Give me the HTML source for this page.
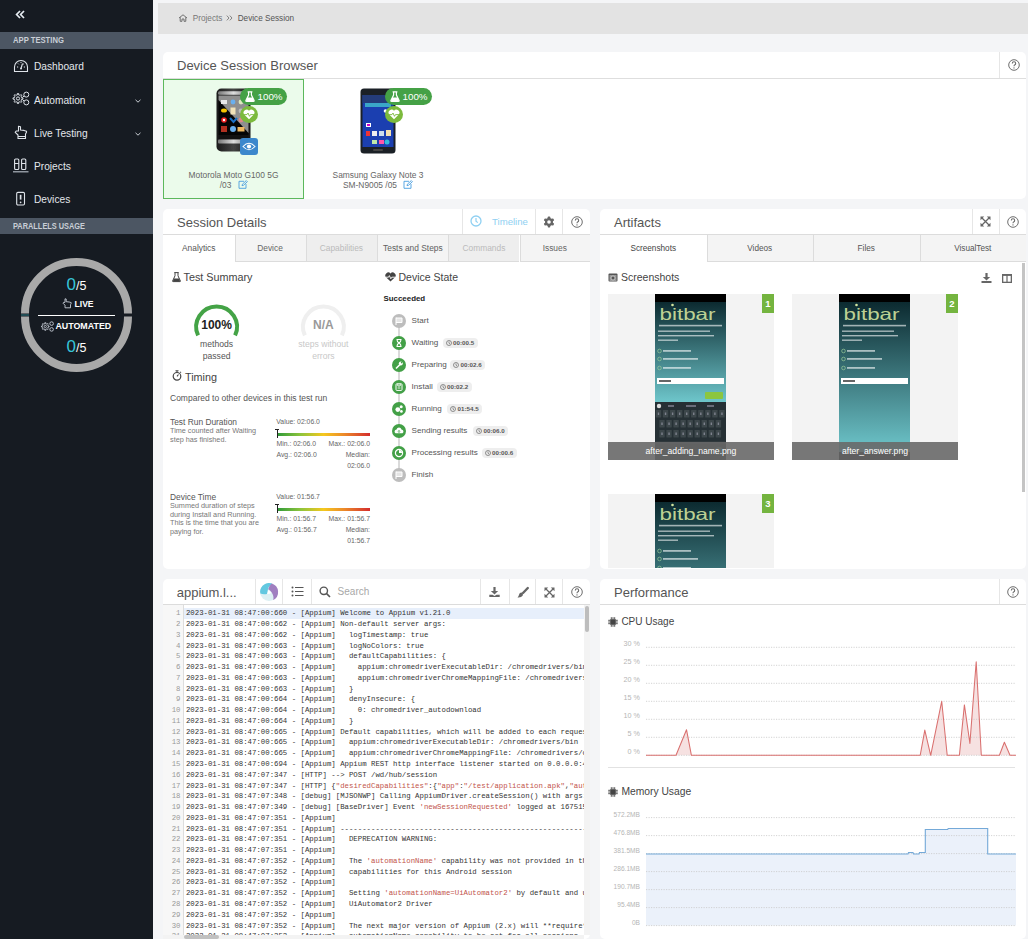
<!DOCTYPE html>
<html><head><meta charset="utf-8">
<style>
*{box-sizing:border-box;margin:0;padding:0}
html,body{width:1028px;height:939px;overflow:hidden;background:#f4f5f7;font-family:"Liberation Sans",sans-serif;color:#333}
.abs{position:absolute}
.tx{position:absolute;white-space:nowrap}
svg{position:absolute;overflow:visible}
.panel{position:absolute;background:#fff;border-radius:5px}
</style></head><body>
<div class="abs" style="left:0px;top:0px;width:153px;height:939px;background:#161b22"></div>
<svg style="left:15px;top:10px" width="10" height="9" viewBox="0 0 10 9"><path d="M5 1 L1.6 4.5 L5 8 M9 1 L5.6 4.5 L9 8" stroke="#e6ecf2" stroke-width="1.7" fill="none"/></svg>
<div class="abs" style="left:0px;top:32px;width:153px;height:17px;background:#4c5663"></div>
<div class="tx" style="left:13px;top:35.1px;font-size:9px;line-height:10.8px;color:#c9ced6;font-weight:700;transform:scaleX(0.85);transform-origin:0 50%">APP TESTING</div>
<div class="abs" style="left:0px;top:218px;width:153px;height:16px;background:#4c5663"></div>
<div class="tx" style="left:13px;top:220.6px;font-size:9px;line-height:10.8px;color:#c9ced6;font-weight:700;transform:scaleX(0.82);transform-origin:0 50%">PARALLELS USAGE</div>
<div class="tx" style="left:34px;top:60.88px;font-size:10.2px;line-height:12.24px;color:#e3e7ec;font-weight:400;">Dashboard</div>
<div class="tx" style="left:34px;top:94.58px;font-size:10.2px;line-height:12.24px;color:#e3e7ec;font-weight:400;">Automation</div>
<div class="tx" style="left:34px;top:128.38px;font-size:10.2px;line-height:12.24px;color:#e3e7ec;font-weight:400;">Live Testing</div>
<div class="tx" style="left:34px;top:161.38px;font-size:10.2px;line-height:12.24px;color:#e3e7ec;font-weight:400;">Projects</div>
<div class="tx" style="left:34px;top:194.38px;font-size:10.2px;line-height:12.24px;color:#e3e7ec;font-weight:400;">Devices</div>
<svg style="left:135px;top:99px" width="6" height="4"><path d="M0.5 0.8 L3 3.2 L5.5 0.8" stroke="#c8cdd3" stroke-width="1" fill="none"/></svg>
<svg style="left:135px;top:132px" width="6" height="4"><path d="M0.5 0.8 L3 3.2 L5.5 0.8" stroke="#c8cdd3" stroke-width="1" fill="none"/></svg>
<svg style="left:13px;top:59px" width="16" height="14" viewBox="0 0 16 14"><path d="M1.5 12.5 V8 A6.5 6.5 0 0 1 14.5 8 V12.5 Z" stroke="#dfe4ea" stroke-width="1.1" fill="none"/><path d="M8 9.5 L9.5 4.5" stroke="#dfe4ea" stroke-width="1.1"/><circle cx="8" cy="9.5" r="1" fill="#dfe4ea"/><path d="M4 8h1.2M10.8 8h1.2M5 4.5l.8.8M11 4.5l-.8.8M8 3v1" stroke="#dfe4ea" stroke-width="1"/></svg>
<svg style="left:12px;top:91px" width="18" height="15" viewBox="0 0 18 15"><path d="M9.47 6.22 L9.65 6.89 L10.96 6.84 L10.96 8.16 L9.65 8.11 L9.47 8.78 L9.36 9.05 L9.01 9.65 L9.97 10.54 L9.04 11.47 L8.15 10.51 L7.55 10.86 L7.28 10.97 L6.61 11.15 L6.66 12.46 L5.34 12.46 L5.39 11.15 L4.72 10.97 L4.45 10.86 L3.85 10.51 L2.96 11.47 L2.03 10.54 L2.99 9.65 L2.64 9.05 L2.53 8.78 L2.35 8.11 L1.04 8.16 L1.04 6.84 L2.35 6.89 L2.53 6.22 L2.64 5.95 L2.99 5.35 L2.03 4.46 L2.96 3.53 L3.85 4.49 L4.45 4.14 L4.72 4.03 L5.39 3.85 L5.34 2.54 L6.66 2.54 L6.61 3.85 L7.28 4.03 L7.55 4.14 L8.15 4.49 L9.04 3.53 L9.97 4.46 L9.01 5.35 L9.36 5.95 Z" stroke="#dfe4ea" stroke-width="1" fill="none" stroke-linejoin="round"/><circle cx="6" cy="7.5" r="1.6" stroke="#dfe4ea" stroke-width="1" fill="none"/><circle cx="14.3" cy="3.6" r="2.5" stroke="#dfe4ea" stroke-width="1" fill="none"/><circle cx="14.3" cy="11.4" r="2.5" stroke="#dfe4ea" stroke-width="1" fill="none"/><path d="M10.6 6.3 L12 5 M10.6 8.7 L12 10" stroke="#dfe4ea" stroke-width="1"/></svg>
<svg style="left:14px;top:125px" width="14" height="15" viewBox="0 0 14 15"><path d="M4.5 1.2 V6 H2.2 L1.2 7.4 L4 10 V13.5 H11.5 V9 L12.5 7.2 V6.2 L10 5.4 L6.5 5 V1.8 Z" stroke="#dfe4ea" stroke-width="1.1" fill="none" stroke-linejoin="round"/><path d="M4 11.5 H11.5" stroke="#dfe4ea" stroke-width="1"/></svg>
<svg style="left:12px;top:158px" width="17" height="17" viewBox="0 0 17 17"><rect x="2.6" y="1" width="4.2" height="10.5" rx="1" stroke="#dfe4ea" stroke-width="1.1" fill="none"/><rect x="9.6" y="1" width="4.2" height="10.5" rx="1" stroke="#dfe4ea" stroke-width="1.1" fill="none"/><path d="M2.6 5.5h4.2M9.6 5.5h4.2" stroke="#dfe4ea" stroke-width="1"/><path d="M1 13.8 H16.5" stroke="#aeb6c0" stroke-width="1.2"/></svg>
<svg style="left:15px;top:191px" width="11" height="15" viewBox="0 0 11 15"><rect x="1.7" y="1.4" width="7.8" height="12.6" rx="1.2" stroke="#dfe4ea" stroke-width="1.1" fill="none"/><path d="M5.6 3.8 V8.6" stroke="#dfe4ea" stroke-width="1.7"/><circle cx="5.6" cy="11.3" r="0.85" fill="#dfe4ea"/></svg>
<svg style="left:0;top:0" width="153" height="400" viewBox="0 0 153 400">
<path d="M25 313.5 A51.5 51.5 0 0 1 128 313.5" stroke="#a9a9a9" stroke-width="8" fill="none"/>
<path d="M25 316.5 A51.5 51.5 0 0 0 128 316.5" stroke="#a9a9a9" stroke-width="8" fill="none"/>
<path d="M21 315 H29" stroke="#2f8a94" stroke-width="0.9"/>
<path d="M38 315.5 H115" stroke="#ffffff" stroke-width="1.2"/>
</svg>
<div class="tx" style="left:0;width:153px;text-align:center;top:275px;color:#fff;line-height:20px"><span style="color:#36c5d8;font-size:17px">0</span><span style="font-size:12.5px">/5</span></div>
<div class="tx" style="left:0;width:153px;text-align:center;top:337px;color:#fff;line-height:20px"><span style="color:#36c5d8;font-size:17px">0</span><span style="font-size:12.5px">/5</span></div>
<div class="tx" style="left:74.5px;top:298.54px;font-size:8.6px;line-height:10.32px;color:#fff;font-weight:700;">LIVE</div>
<svg style="left:62px;top:298px" width="10" height="11" viewBox="0 0 10 11"><path d="M3 0.8 V4.4 H1.5 L1 5.2 L3 7.2 V9.8 H8.5 V6.8 L9.2 5.2 V4.6 L7.2 4 L4.2 3.7 V1 Z" stroke="#c6cdd6" stroke-width="0.9" fill="none"/></svg>
<div class="tx" style="left:55.4px;top:321.26px;font-size:8.9px;line-height:10.68px;color:#fff;font-weight:700;">AUTOMATED</div>
<svg style="left:40.5px;top:321px" width="13" height="11" viewBox="0 0 13 11"><path d="M6.93 4.53 L7.06 5.04 L8.07 5.00 L8.07 6.00 L7.06 5.96 L6.93 6.47 L6.84 6.67 L6.58 7.13 L7.32 7.81 L6.61 8.52 L5.93 7.78 L5.47 8.04 L5.27 8.13 L4.76 8.26 L4.80 9.27 L3.80 9.27 L3.84 8.26 L3.33 8.13 L3.13 8.04 L2.67 7.78 L1.99 8.52 L1.28 7.81 L2.02 7.13 L1.76 6.67 L1.67 6.47 L1.54 5.96 L0.53 6.00 L0.53 5.00 L1.54 5.04 L1.67 4.53 L1.76 4.33 L2.02 3.87 L1.28 3.19 L1.99 2.48 L2.67 3.22 L3.13 2.96 L3.33 2.87 L3.84 2.74 L3.80 1.73 L4.80 1.73 L4.76 2.74 L5.27 2.87 L5.47 2.96 L5.93 3.22 L6.61 2.48 L7.32 3.19 L6.58 3.87 L6.84 4.33 Z" stroke="#c6cdd6" stroke-width="0.9" fill="none"/><circle cx="4.3" cy="5.5" r="1.1" stroke="#c6cdd6" stroke-width="0.8" fill="none"/><circle cx="10.6" cy="2.6" r="1.8" stroke="#c6cdd6" stroke-width="0.9" fill="none"/><circle cx="10.6" cy="8.4" r="1.8" stroke="#c6cdd6" stroke-width="0.9" fill="none"/></svg>
<div class="abs" style="left:158px;top:3px;width:870px;height:31px;background:#e3e3e3"></div>
<svg style="left:178px;top:14px" width="10" height="8" viewBox="0 0 10 8"><path d="M1 4 L5 0.8 L9 4 M2.2 3.2 V7.3 H4 V5 H6 V7.3 H7.8 V3.2" stroke="#666" stroke-width="0.9" fill="none"/></svg>
<div class="tx" style="left:192.8px;top:13.88px;font-size:8.2px;line-height:9.84px;color:#777;font-weight:400;">Projects</div>
<svg style="left:226px;top:15px" width="7" height="6" viewBox="0 0 7 6"><path d="M0.8 0.6 L3 3 L0.8 5.4 M3.8 0.6 L6 3 L3.8 5.4" stroke="#777" stroke-width="0.9" fill="none"/></svg>
<div class="tx" style="left:237.7px;top:13.88px;font-size:8.2px;line-height:9.84px;color:#555;font-weight:400;">Device Session</div>
<div class="panel" style="left:163px;top:52px;width:863px;height:147px"></div>
<div class="abs" style="left:163px;top:78px;width:863px;height:1px;background:#dedede"></div>
<div class="abs" style="left:999px;top:52px;width:1px;height:26px;background:#e6e6e6"></div>
<svg style="left:1007.5px;top:58.7px" width="12" height="12" viewBox="0 0 12 12"><circle cx="6" cy="6" r="5.3" stroke="#666" stroke-width="0.95" fill="none"/><path d="M4.3 4.6 Q4.3 2.8 6 2.8 Q7.7 2.8 7.7 4.4 Q7.7 5.4 6.6 5.9 Q6 6.2 6 7.3" stroke="#666" stroke-width="1.05" fill="none"/><circle cx="6" cy="8.9" r="0.65" fill="#666"/></svg>
<div class="tx" style="left:177px;top:58.0px;font-size:13px;line-height:15.6px;color:#555;font-weight:400;">Device Session Browser</div>
<div class="abs" style="left:163px;top:79px;width:141px;height:120px;background:#ebfbeb;border:1px solid #5cb85c"></div>
<svg style="left:216px;top:88px" width="35" height="64" viewBox="0 0 35 64">
<defs><linearGradient id="pg1" x1="0" x2="1"><stop offset="0" stop-color="#1a1a1a"/><stop offset=".5" stop-color="#444"/><stop offset="1" stop-color="#151515"/></linearGradient>
<linearGradient id="pg2" x1="0" x2="1"><stop offset="0" stop-color="#777"/><stop offset=".5" stop-color="#ddd"/><stop offset="1" stop-color="#777"/></linearGradient></defs>
<rect x="0.5" y="0.5" width="34" height="63" rx="5" fill="url(#pg1)"/>
<rect x="2" y="3.2" width="31" height="3.6" rx="1.5" fill="url(#pg2)"/>
<rect x="2.5" y="7.5" width="30" height="39.5" fill="#050505"/>
<path d="M2.5 7.5 H32.5 V45 L2.5 12 Z" fill="#8f8f8f"/>
<rect x="5" y="12" width="6" height="4" fill="#e8e8e8"/><circle cx="17" cy="14" r="2.4" fill="#6ab0ef"/><circle cx="25" cy="14" r="2.4" fill="#dde8c0"/>
<ellipse cx="8" cy="22.5" rx="3" ry="2" fill="#f5c400"/><rect x="14.5" y="19.5" width="5" height="7" fill="#f1e2b8"/><circle cx="25" cy="23" r="2.4" fill="#bbb"/>
<circle cx="8" cy="32" r="2.8" fill="#e22"/><circle cx="8" cy="32" r="1.2" fill="#fff"/><path d="M14 30 l3.5 4 l3.5-4" stroke="#1a6fc4" stroke-width="2" fill="none"/><circle cx="25" cy="32" r="2.4" fill="#d88"/>
<rect x="5" y="38" width="6" height="6" fill="#b03020"/><circle cx="17" cy="41" r="3" fill="#6ab0ef"/><rect x="21.5" y="39" width="7" height="4.5" fill="#eeb860"/>
<rect x="2.5" y="47" width="30" height="4.5" fill="#111"/>
<rect x="2" y="51.5" width="31" height="4" rx="1" fill="url(#pg2)"/>
<circle cx="17.5" cy="59.5" r="2" fill="none" stroke="#444" stroke-width="0.8"/>
</svg>
<svg style="left:360px;top:88px" width="36" height="66" viewBox="0 0 36 66">
<rect x="0.5" y="0.5" width="35" height="65" rx="3.5" fill="#1b2026"/>
<rect x="2.5" y="7" width="31" height="52" fill="#1b3fb0"/>
<rect x="2.5" y="7" width="31" height="8" fill="#243c7a"/>
<rect x="5" y="15" width="26" height="4" fill="#3aa6c8"/>
<rect x="6" y="35" width="5" height="4" fill="#fff"/><rect x="7" y="36" width="3" height="2" fill="#c0c"/>
<rect x="6" y="43" width="4" height="5" fill="#e33"/><rect x="12" y="43" width="5" height="5" fill="#eee"/><rect x="19" y="43" width="5" height="5" fill="#cde"/><rect x="26" y="42" width="5" height="6" fill="#f3e0b0"/>
<rect x="12" y="52" width="5" height="4" fill="#bfe8a8"/><rect x="19" y="52" width="5" height="4" fill="#f5a"/><circle cx="27" cy="54" r="2.5" fill="#3bd"/>
<circle cx="25.5" cy="23" r="1.8" fill="#fff"/>
<rect x="13" y="61" width="10" height="2" rx="1" fill="#444"/>
</svg>
<div class="abs" style="left:240px;top:88px;width:47px;height:17px;border-radius:9px;background:#45a146"></div>
<svg style="left:245.4px;top:91px" width="10" height="11" viewBox="0 0 10 11"><path d="M2.6 0.8 H7.4 M3.6 0.8 V4 L0.9 9.4 Q0.6 10.3 1.5 10.3 H8.5 Q9.4 10.3 9.1 9.4 L6.4 4 V0.8" stroke="#fff" stroke-width="1.2" fill="none"/><path d="M2.3 6.6 H7.7 L9 10 H1 Z" fill="#fff"/></svg>
<div class="tx" style="left:257.5px;top:90.92px;font-size:9.8px;line-height:11.76px;color:#fff;font-weight:400;">100%</div>
<div class="abs" style="left:240px;top:106px;width:18px;height:17px;border-radius:50%;background:#7cba3d"></div>
<svg style="left:243px;top:109px" width="12" height="11" viewBox="0 0 12 11"><path d="M6 10.3 L1.2 5.4 A2.8 2.8 0 0 1 6 1.8 A2.8 2.8 0 0 1 10.8 5.4 Z" fill="#fff"/><path d="M1 5.6 H4 L5 4 L6.5 7.3 L7.5 5.6 H11" stroke="#7cba3d" stroke-width="0.9" fill="none"/></svg>
<div class="abs" style="left:385px;top:88px;width:47px;height:17px;border-radius:9px;background:#45a146"></div>
<svg style="left:390.4px;top:91px" width="10" height="11" viewBox="0 0 10 11"><path d="M2.6 0.8 H7.4 M3.6 0.8 V4 L0.9 9.4 Q0.6 10.3 1.5 10.3 H8.5 Q9.4 10.3 9.1 9.4 L6.4 4 V0.8" stroke="#fff" stroke-width="1.2" fill="none"/><path d="M2.3 6.6 H7.7 L9 10 H1 Z" fill="#fff"/></svg>
<div class="tx" style="left:402.5px;top:90.92px;font-size:9.8px;line-height:11.76px;color:#fff;font-weight:400;">100%</div>
<div class="abs" style="left:385px;top:106px;width:18px;height:17px;border-radius:50%;background:#7cba3d"></div>
<svg style="left:388px;top:109px" width="12" height="11" viewBox="0 0 12 11"><path d="M6 10.3 L1.2 5.4 A2.8 2.8 0 0 1 6 1.8 A2.8 2.8 0 0 1 10.8 5.4 Z" fill="#fff"/><path d="M1 5.6 H4 L5 4 L6.5 7.3 L7.5 5.6 H11" stroke="#7cba3d" stroke-width="0.9" fill="none"/></svg>
<div class="abs" style="left:240px;top:138px;width:18px;height:17px;border-radius:3px;background:#3c87cc"></div>
<svg style="left:242px;top:142px" width="14" height="9" viewBox="0 0 14 9"><path d="M1 4.5 Q7 -2 13 4.5 Q7 11 1 4.5 Z" stroke="#fff" stroke-width="1.1" fill="none"/><circle cx="7" cy="4.5" r="2.1" fill="#fff"/></svg>
<div class="tx" style="left:83.5px;width:300px;text-align:center;top:169.96px;font-size:8.4px;line-height:10.08px;color:#666;font-weight:400;">Motorola Moto G100 5G</div>
<div class="tx" style="left:75.5px;width:300px;text-align:center;top:180.46px;font-size:8.4px;line-height:10.08px;color:#666;font-weight:400;">/03</div>
<div class="tx" style="left:228px;width:300px;text-align:center;top:169.96px;font-size:8.4px;line-height:10.08px;color:#666;font-weight:400;">Samsung Galaxy Note 3</div>
<div class="tx" style="left:220px;width:300px;text-align:center;top:180.46px;font-size:8.4px;line-height:10.08px;color:#666;font-weight:400;">SM-N9005 /05</div>
<svg style="left:238px;top:180px" width="10" height="9" viewBox="0 0 10 9"><path d="M6 1.3 H1 V8.3 H8 V4" stroke="#4a9ee0" stroke-width="0.9" fill="none"/><path d="M4 5.7 L4.4 4.2 L8.3 0.6 L9.4 1.7 L5.5 5.3 Z" stroke="#4a9ee0" stroke-width="0.9" fill="none"/></svg>
<svg style="left:403px;top:180px" width="10" height="9" viewBox="0 0 10 9"><path d="M6 1.3 H1 V8.3 H8 V4" stroke="#4a9ee0" stroke-width="0.9" fill="none"/><path d="M4 5.7 L4.4 4.2 L8.3 0.6 L9.4 1.7 L5.5 5.3 Z" stroke="#4a9ee0" stroke-width="0.9" fill="none"/></svg>
<div class="panel" style="left:163px;top:209px;width:427px;height:360px"></div>
<div class="tx" style="left:177px;top:215.0px;font-size:13px;line-height:15.6px;color:#555;font-weight:400;">Session Details</div>
<div class="abs" style="left:462px;top:209px;width:1px;height:25px;background:#e6e6e6"></div>
<div class="abs" style="left:535px;top:209px;width:1px;height:25px;background:#e6e6e6"></div>
<div class="abs" style="left:562px;top:209px;width:1px;height:25px;background:#e6e6e6"></div>
<svg style="left:470px;top:215px" width="12" height="12" viewBox="0 0 12 12"><circle cx="6" cy="6" r="5" stroke="#8fd0f2" stroke-width="1.3" fill="none"/><path d="M6 3 V6.2 L7.8 7.6" stroke="#8fd0f2" stroke-width="1.2" fill="none"/></svg>
<div class="tx" style="left:492px;top:215.74px;font-size:9.6px;line-height:11.52px;color:#8fd0f2;font-weight:400;">Timeline</div>
<svg style="left:543.3px;top:216px" width="12" height="12" viewBox="0 0 12 12"><circle cx="6" cy="6" r="4" fill="#666"/><rect x="4.75" y="0.6" width="2.5" height="3" rx="0.7" fill="#666" transform="rotate(0 6 6)"/><rect x="4.75" y="0.6" width="2.5" height="3" rx="0.7" fill="#666" transform="rotate(60 6 6)"/><rect x="4.75" y="0.6" width="2.5" height="3" rx="0.7" fill="#666" transform="rotate(120 6 6)"/><rect x="4.75" y="0.6" width="2.5" height="3" rx="0.7" fill="#666" transform="rotate(180 6 6)"/><rect x="4.75" y="0.6" width="2.5" height="3" rx="0.7" fill="#666" transform="rotate(240 6 6)"/><rect x="4.75" y="0.6" width="2.5" height="3" rx="0.7" fill="#666" transform="rotate(300 6 6)"/><circle cx="6" cy="6" r="1.8" fill="#fff"/></svg>
<svg style="left:570.8px;top:215.7px" width="12" height="12" viewBox="0 0 12 12"><circle cx="6" cy="6" r="5.3" stroke="#666" stroke-width="0.95" fill="none"/><path d="M4.3 4.6 Q4.3 2.8 6 2.8 Q7.7 2.8 7.7 4.4 Q7.7 5.4 6.6 5.9 Q6 6.2 6 7.3" stroke="#666" stroke-width="1.05" fill="none"/><circle cx="6" cy="8.9" r="0.65" fill="#666"/></svg>
<div class="abs" style="left:163px;top:234px;width:427px;height:1px;background:#dcdcdc"></div>
<div class="abs" style="left:163px;top:235px;width:71.5px;height:27px;background:#fff"></div>
<div class="tx" style="left:48.75px;width:300px;text-align:center;top:243.16px;font-size:8.4px;line-height:10.08px;color:#555;font-weight:400;">Analytics</div>
<div class="abs" style="left:234.5px;top:235px;width:71.0px;height:27px;background:#f4f4f4;border-left:1px solid #dcdcdc;border-bottom:1px solid #dcdcdc"></div>
<div class="tx" style="left:120.0px;width:300px;text-align:center;top:243.16px;font-size:8.4px;line-height:10.08px;color:#666;font-weight:400;">Device</div>
<div class="abs" style="left:305.5px;top:235px;width:71.80000000000001px;height:27px;background:#eeeeee;border-left:1px solid #dcdcdc;border-bottom:1px solid #dcdcdc"></div>
<div class="tx" style="left:191.39999999999998px;width:300px;text-align:center;top:243.16px;font-size:8.4px;line-height:10.08px;color:#bbb;font-weight:400;">Capabilities</div>
<div class="abs" style="left:377.3px;top:235px;width:71.09999999999997px;height:27px;background:#f4f4f4;border-left:1px solid #dcdcdc;border-bottom:1px solid #dcdcdc"></div>
<div class="tx" style="left:262.85px;width:300px;text-align:center;top:243.16px;font-size:8.4px;line-height:10.08px;color:#606060;font-weight:400;">Tests and Steps</div>
<div class="abs" style="left:448.4px;top:235px;width:71.10000000000002px;height:27px;background:#eeeeee;border-left:1px solid #dcdcdc;border-bottom:1px solid #dcdcdc"></div>
<div class="tx" style="left:333.95px;width:300px;text-align:center;top:243.16px;font-size:8.4px;line-height:10.08px;color:#bbb;font-weight:400;">Commands</div>
<div class="abs" style="left:519.5px;top:235px;width:70.5px;height:27px;background:#f4f4f4;border-left:1px solid #dcdcdc;border-bottom:1px solid #dcdcdc"></div>
<div class="tx" style="left:404.75px;width:300px;text-align:center;top:243.16px;font-size:8.4px;line-height:10.08px;color:#666;font-weight:400;">Issues</div>
<svg style="left:172px;top:272px" width="9" height="10" viewBox="0 0 9 10"><path d="M2.3 0.6 H6.7 M3 0.6 V3.8 L0.6 9 Q0.4 9.6 1.1 9.6 H7.9 Q8.6 9.6 8.4 9 L6 3.8 V0.6" stroke="#444" stroke-width="1" fill="none"/><path d="M1.8 6.5 H7.2 L8.2 9.4 H0.8 Z" fill="#444"/></svg>
<div class="tx" style="left:183.5px;top:271.02px;font-size:10.8px;line-height:12.96px;color:#444;font-weight:400;">Test Summary</div>
<svg style="left:385px;top:272px" width="11" height="10" viewBox="0 0 11 10"><path d="M5.5 9.5 L1 5.2 A2.6 2.6 0 0 1 5.5 1.6 A2.6 2.6 0 0 1 10 5.2 Z" fill="#444"/><path d="M0.8 5.2 H3.5 L4.4 3.6 L5.8 6.8 L6.8 5.2 H10.2" stroke="#fff" stroke-width="0.9" fill="none"/></svg>
<div class="tx" style="left:398.5px;top:271.2px;font-size:10.5px;line-height:12.6px;color:#444;font-weight:400;">Device State</div>
<svg style="left:0;top:0" width="400" height="400"><path d="M198.11 335.42 A20.4 20.4 0 1 1 235.09 335.42" stroke="#44a346" stroke-width="4" fill="none"/><path d="M304.91 335.42 A20.4 20.4 0 1 1 341.89 335.42" stroke="#efefef" stroke-width="4" fill="none"/></svg>
<div class="tx" style="left:66.6px;width:300px;text-align:center;top:318.0px;font-size:12px;line-height:14.4px;color:#222;font-weight:700;">100%</div>
<div class="tx" style="left:66.6px;width:300px;text-align:center;top:339.34px;font-size:8.6px;line-height:10.32px;color:#555;font-weight:400;">methods</div>
<div class="tx" style="left:66.6px;width:300px;text-align:center;top:350.54px;font-size:8.6px;line-height:10.32px;color:#555;font-weight:400;">passed</div>
<div class="tx" style="left:173.39999999999998px;width:300px;text-align:center;top:318.0px;font-size:12px;line-height:14.4px;color:#999;font-weight:700;">N/A</div>
<div class="tx" style="left:173.39999999999998px;width:300px;text-align:center;top:339.34px;font-size:8.6px;line-height:10.32px;color:#c8c8c8;font-weight:400;">steps without</div>
<div class="tx" style="left:173.39999999999998px;width:300px;text-align:center;top:350.54px;font-size:8.6px;line-height:10.32px;color:#c8c8c8;font-weight:400;">errors</div>
<svg style="left:172px;top:370px" width="10" height="11" viewBox="0 0 10 11"><circle cx="5" cy="6.3" r="3.8" stroke="#444" stroke-width="1.2" fill="none"/><path d="M3.5 0.8 H6.5 M5 0.8 V2.5 M5 6.3 L6.5 4.5 M8.2 2.6 L9 1.8" stroke="#444" stroke-width="1.1" fill="none"/></svg>
<div class="tx" style="left:185px;top:370.62px;font-size:10.8px;line-height:12.96px;color:#444;font-weight:400;">Timing</div>
<div class="tx" style="left:170px;top:392.9px;font-size:8.5px;line-height:10.2px;color:#555;font-weight:400;">Compared to other devices in this test run</div>
<div class="tx" style="left:170px;top:416.76px;font-size:8.4px;line-height:10.08px;color:#555;font-weight:400;">Test Run Duration</div>
<div class="tx" style="left:170px;top:426.95px;font-size:7.25px;line-height:8.7px;color:#777;font-weight:400;">Time counted after Waiting</div>
<div class="tx" style="left:170px;top:435.55px;font-size:7.25px;line-height:8.7px;color:#777;font-weight:400;">step has finished.</div>
<div class="tx" style="left:276.3px;top:417.69px;font-size:6.85px;line-height:8.22px;color:#666;font-weight:400;">Value: 02:06.0</div>
<div class="abs" style="left:276.5px;top:432.8px;width:93.5px;height:3px;background:linear-gradient(90deg,#2e9a3a 0%,#8cc43c 25%,#f5c81e 50%,#ec8a2a 72%,#d42d2d 100%)"></div>
<div class="abs" style="left:276.5px;top:429.3px;width:1.2px;height:9px;background:#222"></div>
<div class="abs" style="left:275px;top:429.3px;width:4px;height:1px;background:#222"></div>
<div class="tx" style="left:276.5px;top:439.69px;font-size:6.85px;line-height:8.22px;color:#666;font-weight:400;">Min.: 02:06.0</div>
<div class="tx" style="right:658px;text-align:right;top:439.69px;font-size:6.85px;line-height:8.22px;color:#666;font-weight:400;">Max.: 02:06.0</div>
<div class="tx" style="left:276.5px;top:450.69px;font-size:6.85px;line-height:8.22px;color:#666;font-weight:400;">Avg.: 02:06.0</div>
<div class="tx" style="right:658px;text-align:right;top:450.69px;font-size:6.85px;line-height:8.22px;color:#666;font-weight:400;">Median:</div>
<div class="tx" style="right:658px;text-align:right;top:461.69px;font-size:6.85px;line-height:8.22px;color:#666;font-weight:400;">02:06.0</div>
<div class="tx" style="left:170px;top:491.76px;font-size:8.4px;line-height:10.08px;color:#555;font-weight:400;">Device Time</div>
<div class="tx" style="left:170px;top:501.95px;font-size:7.25px;line-height:8.7px;color:#777;font-weight:400;">Summed duration of steps</div>
<div class="tx" style="left:170px;top:510.55px;font-size:7.25px;line-height:8.7px;color:#777;font-weight:400;">during Install and Running.</div>
<div class="tx" style="left:170px;top:519.15px;font-size:7.25px;line-height:8.7px;color:#777;font-weight:400;">This is the time that you are</div>
<div class="tx" style="left:170px;top:527.75px;font-size:7.25px;line-height:8.7px;color:#777;font-weight:400;">paying for.</div>
<div class="tx" style="left:276.3px;top:492.69px;font-size:6.85px;line-height:8.22px;color:#666;font-weight:400;">Value: 01:56.7</div>
<div class="abs" style="left:276.5px;top:507.8px;width:93.5px;height:3px;background:linear-gradient(90deg,#2e9a3a 0%,#8cc43c 25%,#f5c81e 50%,#ec8a2a 72%,#d42d2d 100%)"></div>
<div class="abs" style="left:276.5px;top:504.3px;width:1.2px;height:9px;background:#222"></div>
<div class="abs" style="left:275px;top:504.3px;width:4px;height:1px;background:#222"></div>
<div class="tx" style="left:276.5px;top:514.69px;font-size:6.85px;line-height:8.22px;color:#666;font-weight:400;">Min.: 01:56.7</div>
<div class="tx" style="right:658px;text-align:right;top:514.69px;font-size:6.85px;line-height:8.22px;color:#666;font-weight:400;">Max.: 01:56.7</div>
<div class="tx" style="left:276.5px;top:525.69px;font-size:6.85px;line-height:8.22px;color:#666;font-weight:400;">Avg.: 01:56.7</div>
<div class="tx" style="right:658px;text-align:right;top:525.69px;font-size:6.85px;line-height:8.22px;color:#666;font-weight:400;">Median:</div>
<div class="tx" style="right:658px;text-align:right;top:536.69px;font-size:6.85px;line-height:8.22px;color:#666;font-weight:400;">01:56.7</div>
<div class="tx" style="left:383.5px;top:294.46px;font-size:7.9px;line-height:9.48px;color:#222;font-weight:700;">Succeeded</div>
<div class="abs" style="left:398px;top:321.2px;width:1.6px;height:154.0px;background:#dadada"></div>
<div class="abs" style="left:391.9px;top:314.2px;width:14px;height:14px;border-radius:50%;background:#bdbdbd"></div>
<div class="tx" style="left:411.6px;top:316.34px;font-size:8.1px;line-height:9.72px;color:#555;font-weight:400;">Start</div>
<div class="abs" style="left:391.9px;top:336.2px;width:14px;height:14px;border-radius:50%;background:#43a047"></div>
<div class="tx" style="left:411.6px;top:338.34px;font-size:8.1px;line-height:9.72px;color:#555;font-weight:400;">Waiting</div>
<div class="abs" style="left:442.6px;top:338.2px;width:35px;height:10px;border-radius:4px;background:#eeeeee"></div>
<svg style="left:445.6px;top:340.2px" width="6" height="6" viewBox="0 0 6 6"><circle cx="3" cy="3" r="2.5" stroke="#666" stroke-width="0.7" fill="none"/><path d="M3 1.5 V3.2 L4 4" stroke="#666" stroke-width="0.7" fill="none"/></svg>
<div class="tx" style="left:453.1px;top:339.08px;font-size:6.2px;line-height:7.44px;color:#555;font-weight:700;">00:00.5</div>
<div class="abs" style="left:391.9px;top:358.2px;width:14px;height:14px;border-radius:50%;background:#43a047"></div>
<div class="tx" style="left:411.6px;top:360.34px;font-size:8.1px;line-height:9.72px;color:#555;font-weight:400;">Preparing</div>
<div class="abs" style="left:450.1px;top:360.2px;width:35px;height:10px;border-radius:4px;background:#eeeeee"></div>
<svg style="left:453.1px;top:362.2px" width="6" height="6" viewBox="0 0 6 6"><circle cx="3" cy="3" r="2.5" stroke="#666" stroke-width="0.7" fill="none"/><path d="M3 1.5 V3.2 L4 4" stroke="#666" stroke-width="0.7" fill="none"/></svg>
<div class="tx" style="left:460.6px;top:361.08px;font-size:6.2px;line-height:7.44px;color:#555;font-weight:700;">00:02.6</div>
<div class="abs" style="left:391.9px;top:380.2px;width:14px;height:14px;border-radius:50%;background:#43a047"></div>
<div class="tx" style="left:411.6px;top:382.34px;font-size:8.1px;line-height:9.72px;color:#555;font-weight:400;">Install</div>
<div class="abs" style="left:436.6px;top:382.2px;width:35px;height:10px;border-radius:4px;background:#eeeeee"></div>
<svg style="left:439.6px;top:384.2px" width="6" height="6" viewBox="0 0 6 6"><circle cx="3" cy="3" r="2.5" stroke="#666" stroke-width="0.7" fill="none"/><path d="M3 1.5 V3.2 L4 4" stroke="#666" stroke-width="0.7" fill="none"/></svg>
<div class="tx" style="left:447.1px;top:383.08px;font-size:6.2px;line-height:7.44px;color:#555;font-weight:700;">00:02.2</div>
<div class="abs" style="left:391.9px;top:402.2px;width:14px;height:14px;border-radius:50%;background:#43a047"></div>
<div class="tx" style="left:411.6px;top:404.34px;font-size:8.1px;line-height:9.72px;color:#555;font-weight:400;">Running</div>
<div class="abs" style="left:447.1px;top:404.2px;width:35px;height:10px;border-radius:4px;background:#eeeeee"></div>
<svg style="left:450.1px;top:406.2px" width="6" height="6" viewBox="0 0 6 6"><circle cx="3" cy="3" r="2.5" stroke="#666" stroke-width="0.7" fill="none"/><path d="M3 1.5 V3.2 L4 4" stroke="#666" stroke-width="0.7" fill="none"/></svg>
<div class="tx" style="left:457.6px;top:405.08px;font-size:6.2px;line-height:7.44px;color:#555;font-weight:700;">01:54.5</div>
<div class="abs" style="left:391.9px;top:424.2px;width:14px;height:14px;border-radius:50%;background:#43a047"></div>
<div class="tx" style="left:411.6px;top:426.34px;font-size:8.1px;line-height:9.72px;color:#555;font-weight:400;">Sending results</div>
<div class="abs" style="left:473.1px;top:426.2px;width:35px;height:10px;border-radius:4px;background:#eeeeee"></div>
<svg style="left:476.1px;top:428.2px" width="6" height="6" viewBox="0 0 6 6"><circle cx="3" cy="3" r="2.5" stroke="#666" stroke-width="0.7" fill="none"/><path d="M3 1.5 V3.2 L4 4" stroke="#666" stroke-width="0.7" fill="none"/></svg>
<div class="tx" style="left:483.6px;top:427.08px;font-size:6.2px;line-height:7.44px;color:#555;font-weight:700;">00:06.0</div>
<div class="abs" style="left:391.9px;top:446.2px;width:14px;height:14px;border-radius:50%;background:#43a047"></div>
<div class="tx" style="left:411.6px;top:448.34px;font-size:8.1px;line-height:9.72px;color:#555;font-weight:400;">Processing results</div>
<div class="abs" style="left:481.6px;top:448.2px;width:35px;height:10px;border-radius:4px;background:#eeeeee"></div>
<svg style="left:484.6px;top:450.2px" width="6" height="6" viewBox="0 0 6 6"><circle cx="3" cy="3" r="2.5" stroke="#666" stroke-width="0.7" fill="none"/><path d="M3 1.5 V3.2 L4 4" stroke="#666" stroke-width="0.7" fill="none"/></svg>
<div class="tx" style="left:492.1px;top:449.08px;font-size:6.2px;line-height:7.44px;color:#555;font-weight:700;">00:00.6</div>
<div class="abs" style="left:391.9px;top:468.2px;width:14px;height:14px;border-radius:50%;background:#bdbdbd"></div>
<div class="tx" style="left:411.6px;top:470.34px;font-size:8.1px;line-height:9.72px;color:#555;font-weight:400;">Finish</div>
<svg style="left:393.9px;top:316.2px" width="10" height="10" viewBox="0 0 10 10"><path d="M2 1.5 V9 M2 2 H8 V6.5 H2" stroke="#fff" stroke-width="1" fill="#fff" fill-opacity=".6"/></svg>
<svg style="left:393.9px;top:338.2px" width="10" height="10" viewBox="0 0 10 10"><path d="M2.5 1.5 H7.5 M2.5 8.5 H7.5 M3 1.5 Q3 4 5 5 Q7 6 7 8.5 M7 1.5 Q7 4 5 5 Q3 6 3 8.5" stroke="#fff" stroke-width="1.1" fill="none"/></svg>
<svg style="left:393.9px;top:360.2px" width="10" height="10" viewBox="0 0 10 10"><path d="M2 8.5 L6 4.5" stroke="#fff" stroke-width="1.6"/><circle cx="6.8" cy="3.4" r="2" fill="#fff"/><circle cx="7.6" cy="2.6" r="0.8" fill="#43a047"/></svg>
<svg style="left:393.9px;top:382.2px" width="10" height="10" viewBox="0 0 10 10"><rect x="2" y="1.8" width="6" height="6.6" rx="0.8" stroke="#fff" stroke-width="1" fill="none"/><path d="M3.8 1.8 V4 H6.2 V1.8 M3.6 6 H6.4" stroke="#fff" stroke-width="0.9" fill="none"/></svg>
<svg style="left:393.9px;top:404.2px" width="10" height="10" viewBox="0 0 10 10"><circle cx="3.8" cy="5.6" r="2.4" fill="#fff"/><circle cx="7.2" cy="2.8" r="1.5" fill="#fff"/><circle cx="7.4" cy="7.4" r="1.4" fill="#fff"/></svg>
<svg style="left:393.9px;top:426.2px" width="10" height="10" viewBox="0 0 10 10"><path d="M1.5 7.2 A2 2 0 0 1 2.5 3.5 A2.6 2.6 0 0 1 7.5 3.5 A2 2 0 0 1 8.5 7.2 Z" fill="#fff"/><path d="M5 7 V4.5 M4 5.5 L5 4.5 L6 5.5" stroke="#43a047" stroke-width="0.8" fill="none"/></svg>
<svg style="left:393.9px;top:448.2px" width="10" height="10" viewBox="0 0 10 10"><circle cx="5" cy="5" r="3.6" stroke="#fff" stroke-width="1.2" fill="none"/><path d="M5 5 V2 A3 3 0 0 1 8 5 Z" fill="#fff"/></svg>
<svg style="left:393.9px;top:470.2px" width="10" height="10" viewBox="0 0 10 10"><path d="M2 1.5 V9 M2 2 H8 V6.5 H2" stroke="#fff" stroke-width="1" fill="#fff" fill-opacity=".6"/></svg>
<div class="panel" style="left:600px;top:209px;width:426px;height:360px;overflow:hidden"></div>
<div class="tx" style="left:614px;top:215.0px;font-size:13px;line-height:15.6px;color:#555;font-weight:400;">Artifacts</div>
<div class="abs" style="left:971.5px;top:209px;width:1px;height:25px;background:#e6e6e6"></div>
<div class="abs" style="left:999px;top:209px;width:1px;height:25px;background:#e6e6e6"></div>
<svg style="left:980px;top:216px" width="11" height="11" viewBox="0 0 11 11"><path d="M2 2 L9 9 M9 2 L2 9" stroke="#666" stroke-width="1.3"/><path d="M0.5 0.5 H4.2 L0.5 4.2 Z M10.5 0.5 V4.2 L6.8 0.5 Z M0.5 10.5 V6.8 L4.2 10.5 Z M10.5 10.5 H6.8 L10.5 6.8 Z" fill="#666"/></svg>
<svg style="left:1007.3px;top:215.7px" width="12" height="12" viewBox="0 0 12 12"><circle cx="6" cy="6" r="5.3" stroke="#666" stroke-width="0.95" fill="none"/><path d="M4.3 4.6 Q4.3 2.8 6 2.8 Q7.7 2.8 7.7 4.4 Q7.7 5.4 6.6 5.9 Q6 6.2 6 7.3" stroke="#666" stroke-width="1.05" fill="none"/><circle cx="6" cy="8.9" r="0.65" fill="#666"/></svg>
<div class="abs" style="left:600px;top:234px;width:426px;height:1px;background:#dcdcdc"></div>
<div class="abs" style="left:600px;top:235px;width:106.5px;height:27px;background:#fff"></div>
<div class="tx" style="left:503.25px;width:300px;text-align:center;top:244.08px;font-size:8.2px;line-height:9.84px;color:#444;font-weight:400;">Screenshots</div>
<div class="abs" style="left:706.5px;top:235px;width:106.5px;height:27px;background:#f4f4f4;border-left:1px solid #dcdcdc;border-bottom:1px solid #dcdcdc"></div>
<div class="tx" style="left:609.75px;width:300px;text-align:center;top:244.08px;font-size:8.2px;line-height:9.84px;color:#555;font-weight:400;">Videos</div>
<div class="abs" style="left:813px;top:235px;width:106.5px;height:27px;background:#f4f4f4;border-left:1px solid #dcdcdc;border-bottom:1px solid #dcdcdc"></div>
<div class="tx" style="left:716.25px;width:300px;text-align:center;top:244.08px;font-size:8.2px;line-height:9.84px;color:#555;font-weight:400;">Files</div>
<div class="abs" style="left:919.5px;top:235px;width:106.5px;height:27px;background:#f4f4f4;border-left:1px solid #dcdcdc;border-bottom:1px solid #dcdcdc"></div>
<div class="tx" style="left:822.75px;width:300px;text-align:center;top:244.08px;font-size:8.2px;line-height:9.84px;color:#555;font-weight:400;">VisualTest</div>
<svg style="left:608px;top:273px" width="10" height="9" viewBox="0 0 10 9"><rect x="0.5" y="0.5" width="9" height="8" rx="1" fill="#555"/><rect x="1.5" y="2" width="7" height="6" fill="#999"/><circle cx="5" cy="5" r="2" fill="#555" stroke="#ddd" stroke-width="0.7"/></svg>
<div class="tx" style="left:621px;top:271.2px;font-size:10.5px;line-height:12.6px;color:#444;font-weight:400;">Screenshots</div>
<svg style="left:981px;top:273px" width="11" height="10" viewBox="0 0 11 10"><rect x="4.4" y="0" width="2.2" height="4.5" fill="#666"/><path d="M1.8 4 H9.2 L5.5 7.6 Z" fill="#666"/><rect x="0.5" y="8" width="10" height="2" fill="#666"/></svg>
<svg style="left:1002px;top:274px" width="10" height="9" viewBox="0 0 10 9"><rect x="0.65" y="0.9" width="8.7" height="7.45" stroke="#666" stroke-width="1.3" fill="none"/><rect x="0" y="0" width="10" height="1.8" fill="#666"/><path d="M5 1 V8.5" stroke="#666" stroke-width="1.2"/></svg>
<div class="abs" style="left:1022px;top:263px;width:3px;height:229px;background:#c4c4c4"></div>
<div class="abs" style="left:608px;top:294px;width:166px;height:166px;background:#f3f3f3"></div>
<svg style="left:655px;top:294px;overflow:hidden" width="71" height="166" viewBox="0 0 71 166"><defs><linearGradient id="g1" x1="0" y1="0" x2="0" y2="1"><stop offset="0" stop-color="#0c2a30"/><stop offset="1" stop-color="#6ec6cb"/></linearGradient></defs><rect x="0" y="8" width="71" height="100" fill="url(#g1)"/><rect x="0" y="108" width="71" height="58" fill="#263035"/><rect x="50" y="98" width="18" height="7" rx="1" fill="#8cc63f"/><rect x="0" y="150" width="71" height="16" fill="#1c2326"/><rect x="0.8" y="116" width="5.4" height="7.5" rx="0.4" fill="#3d474b"/><rect x="2.8" y="118.5" width="1.4" height="2.5" fill="#aab" opacity=".6"/><rect x="7.85" y="116" width="5.4" height="7.5" rx="0.4" fill="#3d474b"/><rect x="9.85" y="118.5" width="1.4" height="2.5" fill="#aab" opacity=".6"/><rect x="14.9" y="116" width="5.4" height="7.5" rx="0.4" fill="#3d474b"/><rect x="16.9" y="118.5" width="1.4" height="2.5" fill="#aab" opacity=".6"/><rect x="21.95" y="116" width="5.4" height="7.5" rx="0.4" fill="#3d474b"/><rect x="23.95" y="118.5" width="1.4" height="2.5" fill="#aab" opacity=".6"/><rect x="29.0" y="116" width="5.4" height="7.5" rx="0.4" fill="#3d474b"/><rect x="31.0" y="118.5" width="1.4" height="2.5" fill="#aab" opacity=".6"/><rect x="36.05" y="116" width="5.4" height="7.5" rx="0.4" fill="#3d474b"/><rect x="38.05" y="118.5" width="1.4" height="2.5" fill="#aab" opacity=".6"/><rect x="43.099999999999994" y="116" width="5.4" height="7.5" rx="0.4" fill="#3d474b"/><rect x="45.099999999999994" y="118.5" width="1.4" height="2.5" fill="#aab" opacity=".6"/><rect x="50.15" y="116" width="5.4" height="7.5" rx="0.4" fill="#3d474b"/><rect x="52.15" y="118.5" width="1.4" height="2.5" fill="#aab" opacity=".6"/><rect x="57.199999999999996" y="116" width="5.4" height="7.5" rx="0.4" fill="#3d474b"/><rect x="59.199999999999996" y="118.5" width="1.4" height="2.5" fill="#aab" opacity=".6"/><rect x="64.25" y="116" width="5.4" height="7.5" rx="0.4" fill="#3d474b"/><rect x="66.25" y="118.5" width="1.4" height="2.5" fill="#aab" opacity=".6"/><rect x="4.3" y="126" width="5.4" height="7.5" rx="0.4" fill="#3d474b"/><rect x="6.3" y="128.5" width="1.4" height="2.5" fill="#aab" opacity=".6"/><rect x="11.35" y="126" width="5.4" height="7.5" rx="0.4" fill="#3d474b"/><rect x="13.35" y="128.5" width="1.4" height="2.5" fill="#aab" opacity=".6"/><rect x="18.4" y="126" width="5.4" height="7.5" rx="0.4" fill="#3d474b"/><rect x="20.4" y="128.5" width="1.4" height="2.5" fill="#aab" opacity=".6"/><rect x="25.45" y="126" width="5.4" height="7.5" rx="0.4" fill="#3d474b"/><rect x="27.45" y="128.5" width="1.4" height="2.5" fill="#aab" opacity=".6"/><rect x="32.5" y="126" width="5.4" height="7.5" rx="0.4" fill="#3d474b"/><rect x="34.5" y="128.5" width="1.4" height="2.5" fill="#aab" opacity=".6"/><rect x="39.55" y="126" width="5.4" height="7.5" rx="0.4" fill="#3d474b"/><rect x="41.55" y="128.5" width="1.4" height="2.5" fill="#aab" opacity=".6"/><rect x="46.599999999999994" y="126" width="5.4" height="7.5" rx="0.4" fill="#3d474b"/><rect x="48.599999999999994" y="128.5" width="1.4" height="2.5" fill="#aab" opacity=".6"/><rect x="53.65" y="126" width="5.4" height="7.5" rx="0.4" fill="#3d474b"/><rect x="55.65" y="128.5" width="1.4" height="2.5" fill="#aab" opacity=".6"/><rect x="60.699999999999996" y="126" width="5.4" height="7.5" rx="0.4" fill="#3d474b"/><rect x="62.699999999999996" y="128.5" width="1.4" height="2.5" fill="#aab" opacity=".6"/><rect x="4.3" y="136" width="5.4" height="7.5" rx="0.4" fill="#3d474b"/><rect x="6.3" y="138.5" width="1.4" height="2.5" fill="#aab" opacity=".6"/><rect x="11.35" y="136" width="5.4" height="7.5" rx="0.4" fill="#3d474b"/><rect x="13.35" y="138.5" width="1.4" height="2.5" fill="#aab" opacity=".6"/><rect x="18.4" y="136" width="5.4" height="7.5" rx="0.4" fill="#3d474b"/><rect x="20.4" y="138.5" width="1.4" height="2.5" fill="#aab" opacity=".6"/><rect x="25.45" y="136" width="5.4" height="7.5" rx="0.4" fill="#3d474b"/><rect x="27.45" y="138.5" width="1.4" height="2.5" fill="#aab" opacity=".6"/><rect x="32.5" y="136" width="5.4" height="7.5" rx="0.4" fill="#3d474b"/><rect x="34.5" y="138.5" width="1.4" height="2.5" fill="#aab" opacity=".6"/><rect x="39.55" y="136" width="5.4" height="7.5" rx="0.4" fill="#3d474b"/><rect x="41.55" y="138.5" width="1.4" height="2.5" fill="#aab" opacity=".6"/><rect x="46.599999999999994" y="136" width="5.4" height="7.5" rx="0.4" fill="#3d474b"/><rect x="48.599999999999994" y="138.5" width="1.4" height="2.5" fill="#aab" opacity=".6"/><rect x="53.65" y="136" width="5.4" height="7.5" rx="0.4" fill="#3d474b"/><rect x="55.65" y="138.5" width="1.4" height="2.5" fill="#aab" opacity=".6"/><rect x="60.699999999999996" y="136" width="5.4" height="7.5" rx="0.4" fill="#3d474b"/><rect x="62.699999999999996" y="138.5" width="1.4" height="2.5" fill="#aab" opacity=".6"/><rect x="1" y="147" width="69" height="2" fill="#2f383c"/><circle cx="4" cy="112" r="2.2" fill="#ddd"/><rect x="13" y="111.3" width="6" height="1.4" fill="#889"/><rect x="31" y="111.3" width="10" height="1.4" fill="#889"/><rect x="52" y="111.3" width="7" height="1.4" fill="#889"/><circle cx="64" cy="157" r="4" fill="#3a6f6a"/><rect x="0" y="0" width="71" height="8" fill="#000"/><text x="4.5" y="26" font-family="Liberation Sans" font-size="16.5" fill="#d4e5a0" fill-opacity=".9" textLength="56" lengthAdjust="spacingAndGlyphs">bitbar</text><circle cx="17.5" cy="11" r="1.3" fill="#d4e5a0"/><rect x="4" y="30.8" width="63" height="1.6" fill="#fff" opacity=".6"/><rect x="3" y="36.5" width="52" height="1.4" fill="#fff" opacity=".6"/><rect x="3" y="41" width="56" height="1.4" fill="#fff" opacity=".6"/><rect x="3" y="45.5" width="20" height="1.4" fill="#fff" opacity=".6"/><circle cx="4.5" cy="57" r="1.8" fill="none" stroke="#9c9" stroke-width=".7"/><rect x="8" y="56" width="28" height="1.8" fill="#fff" opacity=".6"/><circle cx="4.5" cy="65" r="1.8" fill="none" stroke="#9c9" stroke-width=".7"/><rect x="8" y="64" width="35" height="1.8" fill="#fff" opacity=".6"/><circle cx="4.5" cy="74" r="1.8" fill="none" stroke="#9c9" stroke-width=".7"/><rect x="8" y="73" width="28" height="1.8" fill="#fff" opacity=".6"/><rect x="2" y="84" width="67" height="6" fill="#fff"/><rect x="4" y="86" width="12" height="2" fill="#666"/></svg>
<div class="abs" style="left:762px;top:294px;width:12px;height:19px;background:#74b43f"></div>
<div class="tx" style="left:618px;width:300px;text-align:center;top:297.8px;font-size:9.5px;line-height:11.4px;color:#fff;font-weight:700;">1</div>
<div class="abs" style="left:608px;top:442px;width:166px;height:18px;background:rgba(105,105,105,.9)"></div>
<div class="tx" style="left:541px;width:300px;text-align:center;top:446.34px;font-size:8.6px;line-height:10.32px;color:#fff;font-weight:400;">after_adding_name.png</div>
<div class="abs" style="left:792px;top:294px;width:166px;height:166px;background:#f3f3f3"></div>
<svg style="left:839px;top:294px;overflow:hidden" width="71" height="166" viewBox="0 0 71 166"><defs><linearGradient id="g2" x1="0" y1="0" x2="0" y2="1"><stop offset="0" stop-color="#0c2a30"/><stop offset="1" stop-color="#6ec6cb"/></linearGradient></defs><rect x="0" y="8" width="71" height="150" fill="url(#g2)"/><rect x="0" y="158" width="71" height="8" fill="#000"/><rect x="0" y="0" width="71" height="8" fill="#000"/><text x="4.5" y="26" font-family="Liberation Sans" font-size="16.5" fill="#d4e5a0" fill-opacity=".9" textLength="56" lengthAdjust="spacingAndGlyphs">bitbar</text><circle cx="17.5" cy="11" r="1.3" fill="#d4e5a0"/><rect x="4" y="30.8" width="63" height="1.6" fill="#fff" opacity=".6"/><rect x="3" y="36.5" width="52" height="1.4" fill="#fff" opacity=".6"/><rect x="3" y="41" width="56" height="1.4" fill="#fff" opacity=".6"/><rect x="3" y="45.5" width="20" height="1.4" fill="#fff" opacity=".6"/><circle cx="4.5" cy="57" r="1.8" fill="none" stroke="#9c9" stroke-width=".7"/><rect x="8" y="56" width="28" height="1.8" fill="#fff" opacity=".6"/><circle cx="4.5" cy="65" r="1.8" fill="none" stroke="#9c9" stroke-width=".7"/><rect x="8" y="64" width="35" height="1.8" fill="#fff" opacity=".6"/><circle cx="4.5" cy="74" r="1.8" fill="none" stroke="#9c9" stroke-width=".7"/><rect x="8" y="73" width="28" height="1.8" fill="#fff" opacity=".6"/><rect x="2" y="84" width="67" height="6" fill="#fff"/><rect x="4" y="86" width="12" height="2" fill="#666"/></svg>
<div class="abs" style="left:946px;top:294px;width:12px;height:19px;background:#74b43f"></div>
<div class="tx" style="left:802px;width:300px;text-align:center;top:297.8px;font-size:9.5px;line-height:11.4px;color:#fff;font-weight:700;">2</div>
<div class="abs" style="left:792px;top:442px;width:166px;height:18px;background:rgba(105,105,105,.9)"></div>
<div class="tx" style="left:725px;width:300px;text-align:center;top:446.34px;font-size:8.6px;line-height:10.32px;color:#fff;font-weight:400;">after_answer.png</div>
<div class="abs" style="left:608px;top:494px;width:166px;height:74px;background:#f3f3f3"></div>
<svg style="left:655px;top:494px;overflow:hidden" width="71" height="74" viewBox="0 0 71 74"><defs><linearGradient id="g3" x1="0" y1="0" x2="0" y2="1"><stop offset="0" stop-color="#0c2a30"/><stop offset="1" stop-color="#6ec6cb"/></linearGradient></defs><rect x="0" y="8" width="71" height="150" fill="url(#g3)"/><rect x="0" y="158" width="71" height="8" fill="#000"/><rect x="0" y="0" width="71" height="8" fill="#000"/><text x="4.5" y="26" font-family="Liberation Sans" font-size="16.5" fill="#d4e5a0" fill-opacity=".9" textLength="56" lengthAdjust="spacingAndGlyphs">bitbar</text><circle cx="17.5" cy="11" r="1.3" fill="#d4e5a0"/><rect x="4" y="30.8" width="63" height="1.6" fill="#fff" opacity=".6"/><rect x="3" y="36.5" width="52" height="1.4" fill="#fff" opacity=".6"/><rect x="3" y="41" width="56" height="1.4" fill="#fff" opacity=".6"/><rect x="3" y="45.5" width="20" height="1.4" fill="#fff" opacity=".6"/><circle cx="4.5" cy="57" r="1.8" fill="none" stroke="#9c9" stroke-width=".7"/><rect x="8" y="56" width="28" height="1.8" fill="#fff" opacity=".6"/><circle cx="4.5" cy="65" r="1.8" fill="none" stroke="#9c9" stroke-width=".7"/><rect x="8" y="64" width="35" height="1.8" fill="#fff" opacity=".6"/><circle cx="4.5" cy="74" r="1.8" fill="none" stroke="#9c9" stroke-width=".7"/><rect x="8" y="73" width="28" height="1.8" fill="#fff" opacity=".6"/><rect x="2" y="84" width="67" height="6" fill="#fff"/><rect x="4" y="86" width="12" height="2" fill="#666"/></svg>
<div class="abs" style="left:762px;top:494px;width:12px;height:19px;background:#74b43f"></div>
<div class="tx" style="left:618px;width:300px;text-align:center;top:497.8px;font-size:9.5px;line-height:11.4px;color:#fff;font-weight:700;">3</div>
<div class="panel" style="left:163px;top:579px;width:427px;height:360px;overflow:hidden"></div>
<div class="tx" style="left:176.7px;top:585.0px;font-size:13px;line-height:15.6px;color:#555;font-weight:400;">appium.l...</div>
<div class="abs" style="left:255.2px;top:579px;width:1px;height:25px;background:#e6e6e6"></div>
<div class="abs" style="left:282.2px;top:579px;width:1px;height:25px;background:#e6e6e6"></div>
<div class="abs" style="left:310.6px;top:579px;width:1px;height:25px;background:#e6e6e6"></div>
<div class="abs" style="left:480px;top:579px;width:1px;height:25px;background:#e6e6e6"></div>
<div class="abs" style="left:508.7px;top:579px;width:1px;height:25px;background:#e6e6e6"></div>
<div class="abs" style="left:535.2px;top:579px;width:1px;height:25px;background:#e6e6e6"></div>
<div class="abs" style="left:562.2px;top:579px;width:1px;height:25px;background:#e6e6e6"></div>
<svg style="left:260px;top:582.8px" width="18" height="18" viewBox="0 0 18 18"><circle cx="9" cy="9" r="9" fill="#dcf0f3"/><path d="M0.1 8.6 A9 9 0 0 1 12.5 0.7 L11.4 1.6 Q8 4 7.9 6.5 Q7.6 9.5 7 10.9 Q3 11.5 0.4 10.5 Z" fill="#62c8e0"/><path d="M11.6 0.4 A9 9 0 0 1 13.1 17.1 Q14.5 13.5 11.4 9 Q9.8 7 8.2 6.3 Q9 2.6 11.6 0.4 Z" fill="#a07fc0"/><path d="M8 6.9 Q10.2 7.6 11.4 10 Q10 10.9 7.2 10.9 Q7.9 9 8 6.9 Z" fill="#fff"/></svg>
<svg style="left:291px;top:586px" width="13" height="11" viewBox="0 0 13 11"><circle cx="1.5" cy="1.5" r="1" fill="#555"/><circle cx="1.5" cy="5.5" r="1" fill="#555"/><circle cx="1.5" cy="9.5" r="1" fill="#555"/><path d="M4 1.5 H12.5 M4 5.5 H12.5 M4 9.5 H12.5" stroke="#555" stroke-width="1.2"/></svg>
<svg style="left:319px;top:586px" width="12" height="12" viewBox="0 0 12 12"><circle cx="4.8" cy="4.8" r="3.7" stroke="#555" stroke-width="1.4" fill="none"/><path d="M7.6 7.6 L11 11" stroke="#555" stroke-width="1.6"/></svg>
<div class="tx" style="left:337.6px;top:586.0px;font-size:10px;line-height:12.0px;color:#a8a8a8;font-weight:400;">Search</div>
<svg style="left:489px;top:587px" width="11" height="10" viewBox="0 0 11 10"><rect x="4.4" y="0" width="2.2" height="4.5" fill="#666"/><path d="M1.8 4 H9.2 L5.5 7.6 Z" fill="#666"/><path d="M0.3 7.8 H3.5 L5.5 9 L7.5 7.8 H10.7 V10 H0.3 Z" fill="#666"/></svg>
<svg style="left:516.5px;top:586.5px" width="12" height="11" viewBox="0 0 12 11"><path d="M10.8 1 L6 6" stroke="#666" stroke-width="2.4" stroke-linecap="round"/><path d="M4.6 5.6 Q2.4 5.6 2 7.8 Q1.7 9.6 0.5 10.4 Q4.2 10.8 5.6 8.8 Q6.3 7.6 5.6 6.5 Z" fill="#666"/></svg>
<svg style="left:544px;top:587px" width="11" height="11" viewBox="0 0 11 11"><path d="M2 2 L9 9 M9 2 L2 9" stroke="#666" stroke-width="1.3"/><path d="M0.5 0.5 H4.2 L0.5 4.2 Z M10.5 0.5 V4.2 L6.8 0.5 Z M0.5 10.5 V6.8 L4.2 10.5 Z M10.5 10.5 H6.8 L10.5 6.8 Z" fill="#666"/></svg>
<svg style="left:570.5px;top:585.7px" width="12" height="12" viewBox="0 0 12 12"><circle cx="6" cy="6" r="5.3" stroke="#666" stroke-width="0.95" fill="none"/><path d="M4.3 4.6 Q4.3 2.8 6 2.8 Q7.7 2.8 7.7 4.4 Q7.7 5.4 6.6 5.9 Q6 6.2 6 7.3" stroke="#666" stroke-width="1.05" fill="none"/><circle cx="6" cy="8.9" r="0.65" fill="#666"/></svg>
<div class="abs" style="left:163px;top:604px;width:427px;height:1px;background:#dcdcdc"></div>
<div class="abs" style="left:163px;top:605px;width:20.5px;height:334px;background:#f7f7f7;border-right:1px solid #dddddd"></div>
<div class="abs" style="left:184px;top:607.8px;width:400px;height:10.9px;background:#e7effb"></div>
<div class="abs" style="left:163px;top:605px;width:421px;height:330px;overflow:hidden"><div style="position:absolute;left:0;top:3.3px;font-family:'Liberation Mono',monospace;font-size:7.35px;line-height:10.77px;color:#333"><div style="height:10.77px;white-space:pre"><span class="ln">1</span> 2023-01-31 08:47:00:660 - [Appium] Welcome to Appium v1.21.0</div><div style="height:10.77px;white-space:pre"><span class="ln">2</span> 2023-01-31 08:47:00:662 - [Appium] Non-default server args:</div><div style="height:10.77px;white-space:pre"><span class="ln">3</span> 2023-01-31 08:47:00:662 - [Appium]   logTimestamp: true</div><div style="height:10.77px;white-space:pre"><span class="ln">4</span> 2023-01-31 08:47:00:663 - [Appium]   logNoColors: true</div><div style="height:10.77px;white-space:pre"><span class="ln">5</span> 2023-01-31 08:47:00:663 - [Appium]   defaultCapabilities: {</div><div style="height:10.77px;white-space:pre"><span class="ln">6</span> 2023-01-31 08:47:00:663 - [Appium]     appium:chromedriverExecutableDir: /chromedrivers/bin</div><div style="height:10.77px;white-space:pre"><span class="ln">7</span> 2023-01-31 08:47:00:663 - [Appium]     appium:chromedriverChromeMappingFile: /chromedrivers/chromedriver.json</div><div style="height:10.77px;white-space:pre"><span class="ln">8</span> 2023-01-31 08:47:00:663 - [Appium]   }</div><div style="height:10.77px;white-space:pre"><span class="ln">9</span> 2023-01-31 08:47:00:664 - [Appium]   denyInsecure: {</div><div style="height:10.77px;white-space:pre"><span class="ln">10</span> 2023-01-31 08:47:00:664 - [Appium]     0: chromedriver_autodownload</div><div style="height:10.77px;white-space:pre"><span class="ln">11</span> 2023-01-31 08:47:00:664 - [Appium]   }</div><div style="height:10.77px;white-space:pre"><span class="ln">12</span> 2023-01-31 08:47:00:665 - [Appium] Default capabilities, which will be added to each request</div><div style="height:10.77px;white-space:pre"><span class="ln">13</span> 2023-01-31 08:47:00:665 - [Appium]   appium:chromedriverExecutableDir: /chromedrivers/bin</div><div style="height:10.77px;white-space:pre"><span class="ln">14</span> 2023-01-31 08:47:00:665 - [Appium]   appium:chromedriverChromeMappingFile: /chromedrivers/chromedriver.json</div><div style="height:10.77px;white-space:pre"><span class="ln">15</span> 2023-01-31 08:47:00:694 - [Appium] Appium REST http interface listener started on 0.0.0.0:4723</div><div style="height:10.77px;white-space:pre"><span class="ln">16</span> 2023-01-31 08:47:07:347 - [HTTP] --&gt; POST /wd/hub/session</div><div style="height:10.77px;white-space:pre"><span class="ln">17</span> 2023-01-31 08:47:07:347 - [HTTP] {<span style="color:#c2544b">&quot;desiredCapabilities&quot;</span>:{<span style="color:#c2544b">&quot;app&quot;</span>:<span style="color:#c2544b">&quot;/test/application.apk&quot;</span>,<span style="color:#c2544b">&quot;automationName&quot;</span></div><div style="height:10.77px;white-space:pre"><span class="ln">18</span> 2023-01-31 08:47:07:348 - [debug] [MJSONWP] Calling AppiumDriver.createSession() with args: </div><div style="height:10.77px;white-space:pre"><span class="ln">19</span> 2023-01-31 08:47:07:349 - [debug] [BaseDriver] Event <span style="color:#c2544b">&#x27;newSessionRequested&#x27;</span> logged at 1675154827349</div><div style="height:10.77px;white-space:pre"><span class="ln">20</span> 2023-01-31 08:47:07:351 - [Appium] </div><div style="height:10.77px;white-space:pre"><span class="ln">21</span> 2023-01-31 08:47:07:351 - [Appium] --------------------------------------------------------------------------------</div><div style="height:10.77px;white-space:pre"><span class="ln">22</span> 2023-01-31 08:47:07:351 - [Appium]   DEPRECATION WARNING:</div><div style="height:10.77px;white-space:pre"><span class="ln">23</span> 2023-01-31 08:47:07:351 - [Appium] </div><div style="height:10.77px;white-space:pre"><span class="ln">24</span> 2023-01-31 08:47:07:352 - [Appium]   The <span style="color:#c2544b">&#x27;automationName&#x27;</span> capability was not provided in the desired</div><div style="height:10.77px;white-space:pre"><span class="ln">25</span> 2023-01-31 08:47:07:352 - [Appium]   capabilities for this Android session</div><div style="height:10.77px;white-space:pre"><span class="ln">26</span> 2023-01-31 08:47:07:352 - [Appium] </div><div style="height:10.77px;white-space:pre"><span class="ln">27</span> 2023-01-31 08:47:07:352 - [Appium]   Setting <span style="color:#c2544b">&#x27;automationName=UiAutomator2&#x27;</span> by default and using the</div><div style="height:10.77px;white-space:pre"><span class="ln">28</span> 2023-01-31 08:47:07:352 - [Appium]   UiAutomator2 Driver</div><div style="height:10.77px;white-space:pre"><span class="ln">29</span> 2023-01-31 08:47:07:352 - [Appium] </div><div style="height:10.77px;white-space:pre"><span class="ln">30</span> 2023-01-31 08:47:07:352 - [Appium]   The next major version of Appium (2.x) will **require** the</div><div style="height:10.77px;white-space:pre"><span class="ln">31</span> 2023-01-31 08:47:07:352 - [Appium]   automationName capability to be set for all sessions</div></div></div>
<style>.ln{display:inline-block;width:17.5px;text-align:right;color:#999;margin-right:1px}</style>
<div class="abs" style="left:584px;top:605px;width:6px;height:330px;background:#f3f3f3"></div>
<div class="abs" style="left:585px;top:606px;width:4px;height:26px;background:#bdbdbd;border-radius:2px"></div>
<div class="abs" style="left:163px;top:935px;width:421px;height:4px;background:#f3f3f3"></div>
<div class="abs" style="left:183.5px;top:935px;width:35px;height:4px;background:#c1c1c1;border-radius:2px"></div>
<div class="panel" style="left:600px;top:579px;width:426px;height:360px;overflow:hidden"></div>
<div class="tx" style="left:614px;top:585.0px;font-size:13px;line-height:15.6px;color:#555;font-weight:400;">Performance</div>
<div class="abs" style="left:999px;top:579px;width:1px;height:25px;background:#e6e6e6"></div>
<svg style="left:1007.3px;top:585.7px" width="12" height="12" viewBox="0 0 12 12"><circle cx="6" cy="6" r="5.3" stroke="#666" stroke-width="0.95" fill="none"/><path d="M4.3 4.6 Q4.3 2.8 6 2.8 Q7.7 2.8 7.7 4.4 Q7.7 5.4 6.6 5.9 Q6 6.2 6 7.3" stroke="#666" stroke-width="1.05" fill="none"/><circle cx="6" cy="8.9" r="0.65" fill="#666"/></svg>
<div class="abs" style="left:600px;top:604px;width:426px;height:1px;background:#dcdcdc"></div>
<svg style="left:608px;top:617px" width="10" height="10" viewBox="0 0 10 10"><rect x="2.2" y="2.2" width="5.6" height="5.6" fill="#444"/><path d="M0.2 3.3 H2.2 M0.2 5 H2.2 M0.2 6.7 H2.2 M7.8 3.3 H9.8 M7.8 5 H9.8 M7.8 6.7 H9.8 M3.3 0.2 V2.2 M5 0.2 V2.2 M6.7 0.2 V2.2 M3.3 7.8 V9.8 M5 7.8 V9.8 M6.7 7.8 V9.8" stroke="#444" stroke-width="0.9"/></svg>
<div class="tx" style="left:621.4px;top:616.4px;font-size:10px;line-height:12.0px;color:#444;font-weight:400;">CPU Usage</div>
<svg style="left:608px;top:787px" width="10" height="10" viewBox="0 0 10 10"><rect x="2.2" y="2.2" width="5.6" height="5.6" fill="#444"/><path d="M0.2 3.3 H2.2 M0.2 5 H2.2 M0.2 6.7 H2.2 M7.8 3.3 H9.8 M7.8 5 H9.8 M7.8 6.7 H9.8 M3.3 0.2 V2.2 M5 0.2 V2.2 M6.7 0.2 V2.2 M3.3 7.8 V9.8 M5 7.8 V9.8 M6.7 7.8 V9.8" stroke="#444" stroke-width="0.9"/></svg>
<div class="tx" style="left:621.4px;top:786.12px;font-size:10.3px;line-height:12.36px;color:#444;font-weight:400;">Memory Usage</div>
<div class="abs" style="left:608px;top:767px;width:407px;height:1px;background:#e2e2e2"></div>
<div class="tx" style="right:388.20000000000005px;text-align:right;top:747.68px;font-size:7.2px;line-height:8.64px;color:#b5b5b5;font-weight:400;">0 %</div>
<div class="tx" style="right:388.20000000000005px;text-align:right;top:729.68px;font-size:7.2px;line-height:8.64px;color:#b5b5b5;font-weight:400;">5 %</div>
<div class="tx" style="right:388.20000000000005px;text-align:right;top:711.68px;font-size:7.2px;line-height:8.64px;color:#b5b5b5;font-weight:400;">10 %</div>
<div class="tx" style="right:388.20000000000005px;text-align:right;top:693.68px;font-size:7.2px;line-height:8.64px;color:#b5b5b5;font-weight:400;">15 %</div>
<div class="tx" style="right:388.20000000000005px;text-align:right;top:675.68px;font-size:7.2px;line-height:8.64px;color:#b5b5b5;font-weight:400;">20 %</div>
<div class="tx" style="right:388.20000000000005px;text-align:right;top:657.68px;font-size:7.2px;line-height:8.64px;color:#b5b5b5;font-weight:400;">25 %</div>
<div class="tx" style="right:388.20000000000005px;text-align:right;top:639.68px;font-size:7.2px;line-height:8.64px;color:#b5b5b5;font-weight:400;">30 %</div>
<div class="tx" style="right:388px;text-align:right;top:918.54px;font-size:6.6px;line-height:7.92px;color:#b5b5b5;font-weight:400;">0B</div>
<div class="tx" style="right:388px;text-align:right;top:900.54px;font-size:6.6px;line-height:7.92px;color:#b5b5b5;font-weight:400;">95.4MB</div>
<div class="tx" style="right:388px;text-align:right;top:882.54px;font-size:6.6px;line-height:7.92px;color:#b5b5b5;font-weight:400;">190.7MB</div>
<div class="tx" style="right:388px;text-align:right;top:864.54px;font-size:6.6px;line-height:7.92px;color:#b5b5b5;font-weight:400;">286.1MB</div>
<div class="tx" style="right:388px;text-align:right;top:846.54px;font-size:6.6px;line-height:7.92px;color:#b5b5b5;font-weight:400;">381.5MB</div>
<div class="tx" style="right:388px;text-align:right;top:828.54px;font-size:6.6px;line-height:7.92px;color:#b5b5b5;font-weight:400;">476.8MB</div>
<div class="tx" style="right:388px;text-align:right;top:810.54px;font-size:6.6px;line-height:7.92px;color:#b5b5b5;font-weight:400;">572.2MB</div>
<svg style="left:0;top:0" width="1028" height="939" viewBox="0 0 1028 939"><path d="M646.0 755.3 L676.0 755.3 L686.5 729.7 L691.4 755.3 L920.2 755.3 L924.8 730.1 L930.7 755.3 L941.7 701.3 L947.2 755.3 L959.4 755.3 L964.4 704.9 L969.9 743.4 L976.2 661.7 L981.3 755.3 L999.4 755.3 L1004.4 742.3 L1010.0 755.3 L1016.0 755.3 Z" fill="#f6e1e1"/><path d="M646.0 854.0 L908.0 854.0 L908.5 852.5 L913.0 852.5 L913.5 854.0 L919.0 854.0 L919.5 852.5 L925.3 852.5 L925.3 829.5 L947.7 829.5 L948.2 828.5 L987.7 828.5 L987.7 854.0 L1016.0 854.0 L1016 925.6 L646 925.6 Z" fill="#ebf1fa"/><path d="M646 755.3 H1016" stroke="#c8c8c8" stroke-width="0.8" stroke-dasharray="1.2 1.3"/><path d="M646 737.3 H1016" stroke="#c8c8c8" stroke-width="0.8" stroke-dasharray="1.2 1.3"/><path d="M646 719.3 H1016" stroke="#c8c8c8" stroke-width="0.8" stroke-dasharray="1.2 1.3"/><path d="M646 701.3 H1016" stroke="#c8c8c8" stroke-width="0.8" stroke-dasharray="1.2 1.3"/><path d="M646 683.3 H1016" stroke="#c8c8c8" stroke-width="0.8" stroke-dasharray="1.2 1.3"/><path d="M646 665.3 H1016" stroke="#c8c8c8" stroke-width="0.8" stroke-dasharray="1.2 1.3"/><path d="M646 647.3 H1016" stroke="#c8c8c8" stroke-width="0.8" stroke-dasharray="1.2 1.3"/><path d="M646 925.6 H1016" stroke="#c8c8c8" stroke-width="0.8" stroke-dasharray="1.2 1.3"/><path d="M646 907.6 H1016" stroke="#c8c8c8" stroke-width="0.8" stroke-dasharray="1.2 1.3"/><path d="M646 889.6 H1016" stroke="#c8c8c8" stroke-width="0.8" stroke-dasharray="1.2 1.3"/><path d="M646 871.6 H1016" stroke="#c8c8c8" stroke-width="0.8" stroke-dasharray="1.2 1.3"/><path d="M646 853.6 H1016" stroke="#c8c8c8" stroke-width="0.8" stroke-dasharray="1.2 1.3"/><path d="M646 835.6 H1016" stroke="#c8c8c8" stroke-width="0.8" stroke-dasharray="1.2 1.3"/><path d="M646 817.6 H1016" stroke="#c8c8c8" stroke-width="0.8" stroke-dasharray="1.2 1.3"/><path d="M646.0 755.3 L676.0 755.3 L686.5 729.7 L691.4 755.3 L920.2 755.3 L924.8 730.1 L930.7 755.3 L941.7 701.3 L947.2 755.3 L959.4 755.3 L964.4 704.9 L969.9 743.4 L976.2 661.7 L981.3 755.3 L999.4 755.3 L1004.4 742.3 L1010.0 755.3 L1016.0 755.3" stroke="#d9706f" stroke-width="1.05" fill="none" stroke-linejoin="round"/><path d="M646.0 854.0 L908.0 854.0 L908.5 852.5 L913.0 852.5 L913.5 854.0 L919.0 854.0 L919.5 852.5 L925.3 852.5 L925.3 829.5 L947.7 829.5 L948.2 828.5 L987.7 828.5 L987.7 854.0 L1016.0 854.0" stroke="#74a9d8" stroke-width="1.1" fill="none"/></svg>
</body></html>
